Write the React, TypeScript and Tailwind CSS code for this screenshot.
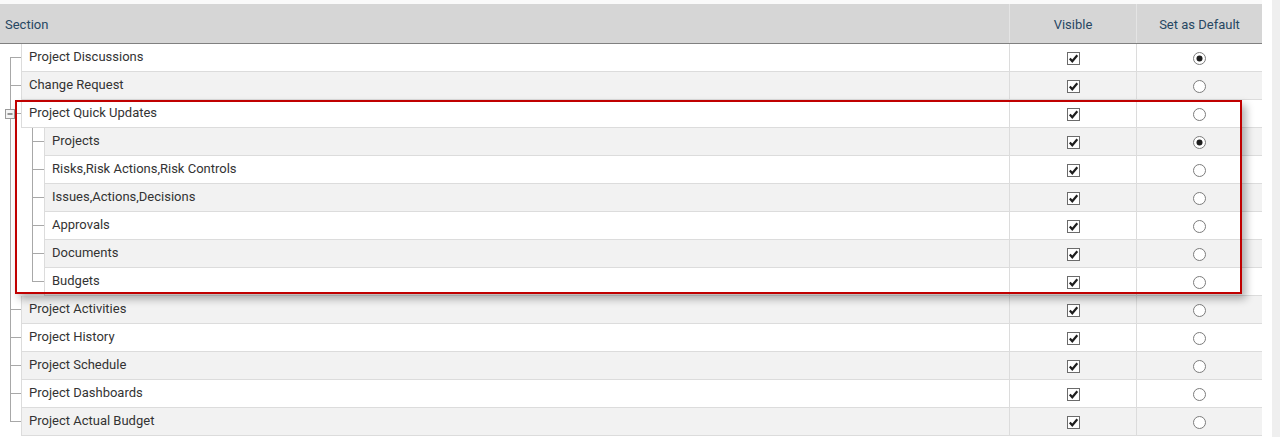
const rows = [
  { label: "Project Discussions", level: 0, def: true },
  { label: "Change Request", level: 0, def: false },
  { label: "Project Quick Updates", level: 0, def: false, parent: true },
  { label: "Projects", level: 1, def: true },
  { label: "Risks,Risk Actions,Risk Controls", level: 1, def: false },
  { label: "Issues,Actions,Decisions", level: 1, def: false },
  { label: "Approvals", level: 1, def: false },
  { label: "Documents", level: 1, def: false },
  { label: "Budgets", level: 1, def: false, lastChild: true },
  { label: "Project Activities", level: 0, def: false },
  { label: "Project History", level: 0, def: false },
  { label: "Project Schedule", level: 0, def: false },
  { label: "Project Dashboards", level: 0, def: false },
  { label: "Project Actual Budget", level: 0, def: false },
];

function Gutter({ row, first, last }: any) {
  const c = "#a8a8a8";
  if (row.level === 1) {
    return (
      <svg width="44" height="28" className="shrink-0">
        <line x1="10.5" y1="0" x2="10.5" y2="28" stroke={c} />
        <line x1="32.5" y1="0" x2="32.5" y2={row.lastChild ? 14 : 28} stroke={c} />
        <line x1="32" y1="13.5" x2="44" y2="13.5" stroke={c} />
      </svg>
    );
  }
  return (
    <svg width="21" height="28" className="shrink-0">
      <line x1="10.5" y1={first ? 13.5 : 0} x2="10.5" y2={last ? 14 : 28} stroke={c} />
      <line x1="10" y1="13.5" x2="21" y2="13.5" stroke={c} />
      {row.parent && (
        <g>
          <rect x="5.5" y="9.5" width="9" height="9" fill="#f4f4f4" stroke="#9a9a9a" />
          <line x1="7.5" y1="14" x2="12.5" y2="14" stroke="#333" />
        </g>
      )}
    </svg>
  );
}

function Check() {
  return (
    <svg width="13" height="13">
      <rect x="0.5" y="0.5" width="12" height="12" fill="#fff" stroke="#6b6b6b" />
      <path d="M2.8 6.4 L5.3 9.2 L10.3 3.2" fill="none" stroke="#1e1e1e" strokeWidth="2.2" />
    </svg>
  );
}

function Radio({ on }: { on: boolean }) {
  return (
    <svg width="13" height="13">
      <circle cx="6.5" cy="6.5" r="6" fill="#fff" stroke="#7c7c7c" />
      {on && <circle cx="6.5" cy="6.5" r="3" fill="#1e1e1e" />}
    </svg>
  );
}

export default function App() {
  return (
    <main className="w-[1280px] h-[437px] overflow-hidden flex bg-white" style={{ fontFamily: "Roboto, 'Liberation Sans', sans-serif" }}>
      <div className="relative w-[1262px] flex flex-col">
        <div className="h-[4px] bg-[#fafafa]" />
        {/* Header */}
        <div className="h-[40px] flex bg-[#d6d6d6] border-b border-[#808080] text-[13px] text-[#274763]">
          <div className="flex-1 flex items-center pl-[5px] pt-[2px]">Section</div>
          <div className="w-[127px] flex items-center justify-center border-l border-[#e4e4e4] pt-[2px]">Visible</div>
          <div className="w-[126px] flex items-center justify-center border-l border-[#e4e4e4] pt-[2px]">Set as Default</div>
        </div>

        {/* Rows */}
        {rows.map((r, i) => (
          <div key={r.label} className="h-[28px] flex">
            <Gutter row={r} first={i === 0} last={i === rows.length - 1} />
            <div
              className={
                "flex-1 flex border-b border-[#dcdcdc] " +
                (i % 2 === 0 ? "bg-white" : "bg-[#f2f2f2]")
              }
            >
              <div className="flex-1 flex items-center pl-[7px] pb-[2px] border-l border-[#dcdcdc] text-[13px] text-[#333]">
                {r.label}
              </div>
              <div className="w-[127px] flex items-center justify-center pt-[2px] border-l border-[#dcdcdc]">
                <Check />
              </div>
              <div className="w-[126px] flex items-center justify-center pt-[2px] border-l border-[#dcdcdc]">
                <Radio on={r.def} />
              </div>
            </div>
          </div>
        ))}

        {/* Highlight annotation */}
        <div className="absolute left-[15px] top-[100px] w-[1227px] h-[194px] border-2 border-[#c00000] shadow-[4px_5px_8px_rgba(0,0,0,0.3)] pointer-events-none" />
      </div>
      <div className="w-[10px]" />
      <div className="w-[8px] bg-[#efefef]" />
    </main>
  );
}
